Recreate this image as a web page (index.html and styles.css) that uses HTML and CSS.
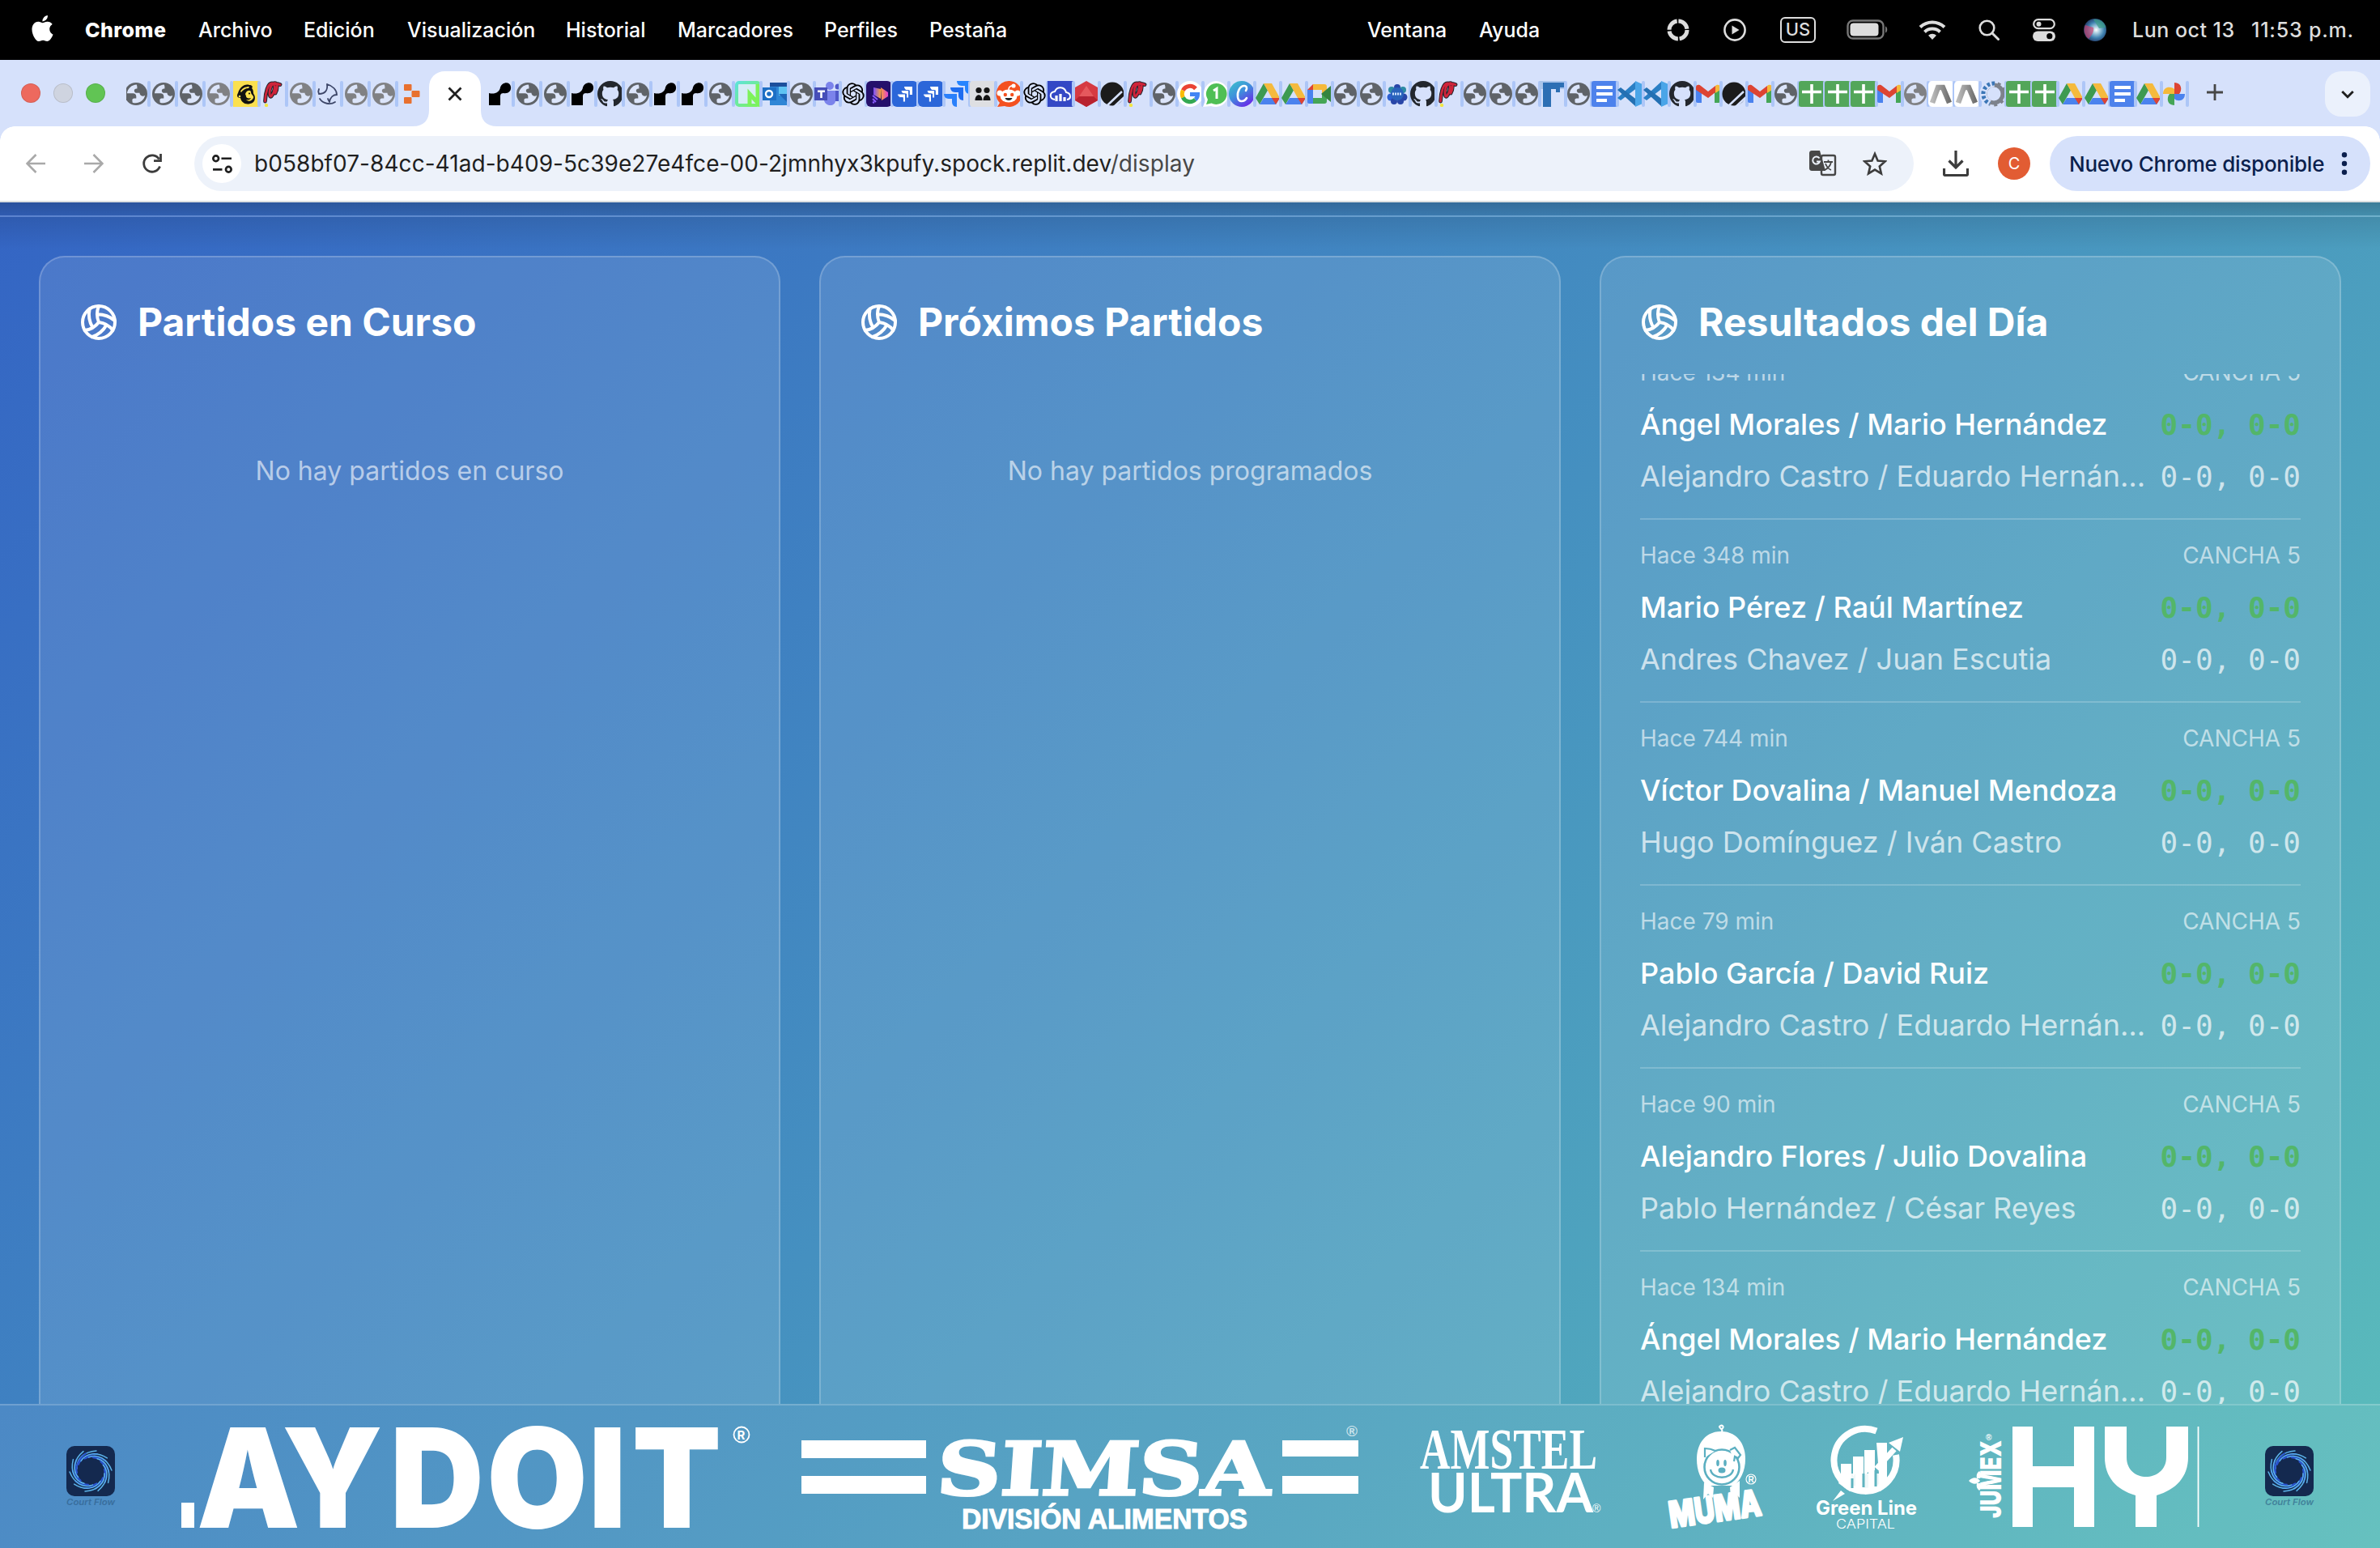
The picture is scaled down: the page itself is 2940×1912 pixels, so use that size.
FILE: index.html
```html
<!DOCTYPE html>
<html lang="es">
<head>
<meta charset="utf-8">
<title>Display</title>
<link rel="stylesheet" href="styles.css">
</head>
<body>
<svg class="sprite" width="0" height="0" aria-hidden="true">
  <defs>
    <linearGradient id="g-neon" x1="0" y1="0" x2="1" y2="1"><stop offset="0" stop-color="#5fe3d8"/><stop offset="1" stop-color="#7df25a"/></linearGradient>
    <linearGradient id="g-canva" x1="0" y1="0" x2=".7" y2="1"><stop offset="0" stop-color="#3cc6c9"/><stop offset=".5" stop-color="#3f8fdc"/><stop offset="1" stop-color="#6a28e8"/></linearGradient>
    <linearGradient id="g-vid" x1="0" y1="0" x2="1" y2="0"><stop offset="0" stop-color="#7b4dff"/><stop offset=".5" stop-color="#f7a13c"/><stop offset="1" stop-color="#e63fd0"/></linearGradient>
    <linearGradient id="g-a" x1="0" y1="0" x2="1" y2="0"><stop offset="0" stop-color="#b9b9b9"/><stop offset="1" stop-color="#6f6f6f"/></linearGradient>
    <radialGradient id="g-siri" cx=".55" cy=".5" r=".55"><stop offset="0" stop-color="#fff"/><stop offset=".3" stop-color="#9fc7dc"/><stop offset=".65" stop-color="#3c7fae"/><stop offset="1" stop-color="#253a66"/></radialGradient>
  </defs>
  <symbol id="globe" viewBox="0 0 32 32"><circle cx="16" cy="16" r="14" fill="currentColor"/><path fill="#dce5fa" d="M16.8 4.6c-6 .2-11 4.600-11.900 10.600h7.200c2.600 0 4.200 1.700 4.200 3.700v2.700h-2.600c-1.500 0-2.500 1-2.300 2.400l.3 2.700c6.700 2.300 14-1.800 15.500-8.900-1.500 1.200-3.600 1.300-5 .3-1.200-.9-1.700-2-1.700-3.300h-3.600c-1.900 0-3.100-1.400-3.100-2.900 0-1.600 1.200-2.500 2.700-2.500h.9V6.800z"/></symbol>
  <symbol id="mailchimp" viewBox="0 0 32 32"><path fill="#fbe04f" d="M0 0h32v32H0z"/><path fill="#111" d="M6 15C8 8 14 3 20 5c3 0 5 2 3 4 3 3 1 6 3 8 2 4 1 10-5 11-6 2-11-2-12-7-4 0-5-3-3-6z"/><path fill="#fbe04f" d="M9 13c2-4 6-6 11-6l-1 2c-4 0-7 2-9 5zM16 14c2-3 6-3 6 0 0 3 4 4 3 7-2 4-6 5-9 2 3 1 5 0 6-2-3 1-6 0-6-2s-2-2 0-5z"/><circle cx="20" cy="15.500" r="1"/><circle cx="8" cy="19" r="1.300" fill="#fbe04f"/></symbol>
  <symbol id="poch" viewBox="0 0 32 32"><path d="M5.500 25C6 14 9 3 14 3s4 10-1 16C10 21 10 7 15.500 3.500s6 5 2.500 11.500M15 4c3-1 6-.5 9 .5" fill="none" stroke="#20242c" stroke-width="4.800" stroke-linecap="round"/><path d="M5.500 25C6 14 9 3 14 3s4 10-1 16C10 21 10 7 15.500 3.500s6 5 2.500 11.500M15 4c3-1 6-.5 9 .5" fill="none" stroke="#d0243a" stroke-width="2.800" stroke-linecap="round"/><circle cx="7" cy="30" r="2.200" fill="#f2e643"/></symbol>
  <symbol id="ballicon" viewBox="0 0 32 32"><g fill="none" stroke="#3d4668" stroke-width="1.800" stroke-linecap="round"><path d="M14 4c1 7-2 12-10 12-1-2-1-4 0-6M14 4c7 2 12 7 12 13-4 0-8 3-9 9M5 22c4 6 13 8 19 4M17 26l-2-4"/></g></symbol>
  <symbol id="replit" viewBox="0 0 32 32"><g fill="#e8702f"><rect x="7" y="4" width="9.500" height="8" rx="1"/><rect x="7" y="20" width="9.500" height="8" rx="1"/><rect x="16.500" y="12" width="10" height="8" rx="1"/></g></symbol>
  <symbol id="manus" viewBox="0 0 32 32"><path d="M2 30V15c7 2 13-1 14-7C18 1 28 0 29 7c1 6-4 9-9 8-4 0-4 3-4 5v10z"/></symbol>
  <symbol id="github" viewBox="0 0 16 16"><path fill="#23272d" d="M8 0C3.580 0 0 3.580 0 8c0 3.540 2.290 6.530 5.470 7.590.4.070.550-.170.550-.380 0-.190-.010-.820-.010-1.490-2.010.370-2.530-.490-2.690-.940-.090-.230-.480-.940-.820-1.130-.280-.150-.680-.520-.010-.530.630-.010 1.080.580 1.230.820.720 1.210 1.870.870 2.330.660.070-.520.280-.870.510-1.070-1.780-.2-3.640-.890-3.640-3.950 0-.870.310-1.590.820-2.150-.080-.2-.360-1.020.080-2.120 0 0 .670-.210 2.200.820.640-.180 1.320-.270 2-.270s1.360.090 2 .270c1.530-1.040 2.200-.820 2.200-.820.440 1.100.160 1.920.080 2.120.510.560.820 1.270.820 2.150 0 3.070-1.870 3.750-3.650 3.950.290.250.540.730.540 1.480 0 1.070-.010 1.930-.010 2.200 0 .210.150.460.550.380A8.010 8.010 0 0 0 16 8c0-4.420-3.580-8-8-8z"/></symbol>
  <symbol id="neon" viewBox="0 0 32 32"><rect x="2" y="2" width="28" height="28" rx="3" fill="#d6ecf6" stroke="url(#g-neon)" stroke-width="4"/><path d="M18 30V16l10 11V4" fill="none" stroke="#7df25a" stroke-width="5"/></symbol>
  <symbol id="outlook" viewBox="0 0 32 32"><path fill="#2f86d6" d="M9 2h23v28H9z"/><path fill="#1c4f9c" d="M9 2h23v5H9z"/><path fill="#5fc3f3" d="M20 7h12v11H20z"/><path fill="#1f66b8" d="M20 16l12 12V16z"/><path fill="#1d6fc5" d="M0 8h17v16H0z"/><circle cx="8" cy="16" r="4" fill="none" stroke="#fff" stroke-width="2.400"/></symbol>
  <symbol id="teams" viewBox="0 0 32 32"><circle cx="19" cy="6" r="5" fill="#7b83eb"/><circle cx="29" cy="7" r="3.500" fill="#5059c9"/><path fill="#5059c9" d="M22 12h10v13H22z"/><path fill="#7b83eb" d="M12 12h14v12c0 8-12 8-14 0z"/><path fill="#464eb8" d="M0 8h16v16H0z"/><path fill="#fff" d="M4 11.500h9V14H9.800v7H7.200v-7H4z"/></symbol>
  <symbol id="openai" viewBox="-2 -2 28 28"><path d="M22.282 9.821a5.985 5.985 0 0 0-.516-4.911 6.046 6.046 0 0 0-6.510-2.900A6.065 6.065 0 0 0 4.981 4.182a5.985 5.985 0 0 0-3.998 2.900 6.046 6.046 0 0 0 .743 7.097 5.980 5.980 0 0 0 .511 4.911 6.051 6.051 0 0 0 6.515 2.900A5.985 5.985 0 0 0 13.260 24a6.056 6.056 0 0 0 5.772-4.206 5.989 5.989 0 0 0 3.998-2.900 6.056 6.056 0 0 0-.748-7.073zm-9.022 12.608a4.476 4.476 0 0 1-2.876-1.041l.142-.080 4.778-2.758a.795.795 0 0 0 .393-.681v-6.737l2.020 1.169a.071.071 0 0 1 .038.052v5.583a4.504 4.504 0 0 1-4.495 4.494zm-9.661-4.125a4.471 4.471 0 0 1-.535-3.014l.142.085 4.783 2.758a.771.771 0 0 0 .781 0l5.843-3.369v2.332a.080.080 0 0 1-.033.062L9.740 19.950a4.499 4.499 0 0 1-6.141-1.646zM2.341 7.896a4.485 4.485 0 0 1 2.366-1.973V11.600a.766.766 0 0 0 .388.677l5.814 3.354-2.020 1.169a.076.076 0 0 1-.071 0l-4.830-2.787A4.504 4.504 0 0 1 2.341 7.872zm16.596 3.856L13.104 8.364 15.119 7.200a.076.076 0 0 1 .071 0l4.830 2.791a4.494 4.494 0 0 1-.677 8.104v-5.677a.790.790 0 0 0-.407-.667zm2.011-3.023l-.142-.085-4.774-2.782a.776.776 0 0 0-.785 0L9.409 9.230V6.897a.066.066 0 0 1 .028-.062l4.830-2.787a4.499 4.499 0 0 1 6.680 4.660zM8.307 12.863l-2.020-1.164a.080.080 0 0 1-.038-.057V6.074a4.499 4.499 0 0 1 7.376-3.454l-.142.081L8.704 5.459a.795.795 0 0 0-.393.681zm1.098-2.365l2.602-1.500 2.607 1.500v2.999l-2.597 1.500-2.607-1.500z"/></symbol>
  <symbol id="vid" viewBox="0 0 32 32"><rect width="32" height="32" rx="6" fill="#25106b"/><path fill="url(#g-vid)" d="M9 8l9 2v12l-9-5zM18 8l9 6v5l-8 5z"/><path d="M8 18l6 5M8 22l4 4M8 26l2 1" stroke="#8a5bff" stroke-width="2"/></symbol>
  <symbol id="jirabox" viewBox="0 0 32 32"><rect width="32" height="32" rx="6" fill="#2b66d9"/><path fill="#fff" d="M15 7h10v10h-3.200v-5.400H19.500c-2.500 0-4.500-2-4.500-4.600z"/><path fill="#fff" d="M11 11.500h9.600V21h-3v-5h-2.300c-2.400 0-4.300-2-4.300-4.500z" stroke="#2b66d9"/><path fill="#fff" d="M6.500 16h10v10h-3.200v-5.400H11c-2.500 0-4.500-2-4.500-4.600z" stroke="#2b66d9"/></symbol>
  <symbol id="jira" viewBox="0 0 32 32"><path fill="#2684ff" d="M16 0h16v16c-4 0-6-3-6-6V6h-4c-4 0-6-3-6-6z"/><path fill="#1f6df0" d="M8 8h16v16c-4 0-6-3-6-6v-4h-4c-4 0-6-3-6-6z"/><path fill="#2a80fb" d="M0 16h16v16c-4 0-6-3-6-6v-4H6c-4 0-6-3-6-6z"/></symbol>
  <symbol id="people" viewBox="0 0 32 32"><rect width="32" height="32" rx="4" fill="#dedfe2"/><g fill="#151515"><circle cx="11" cy="11.500" r="3.600"/><circle cx="21" cy="11.500" r="3.600"/><path d="M6.500 24c0-9 9-9 9 0zM16.500 24c0-9 9-9 9 0z"/></g></symbol>
  <symbol id="reddit" viewBox="0 0 32 32"><path fill="#f4501f" d="M16 0a16 16 0 1 1-5 31l-9 1 3-5A16 16 0 0 1 16 0z"/><circle cx="5" cy="15" r="3.500" fill="#fff"/><circle cx="27" cy="15" r="3.500" fill="#fff"/><ellipse cx="16" cy="18.500" rx="10.500" ry="8" fill="#fff"/><circle cx="22" cy="6" r="2.600" fill="#fff"/><path d="M16 11c0-3 2-5 5-5" stroke="#fff" stroke-width="1.600" fill="none"/><circle cx="11.800" cy="17" r="2.200" fill="#f4501f"/><circle cx="20.200" cy="17" r="2.200" fill="#f4501f"/><path d="M11.500 21h9c-1 4-8 4-9 0z" fill="#222"/></symbol>
  <symbol id="cloud" viewBox="0 0 32 32"><path fill="#3448c5" d="M0 0h32v32H0z"/><path d="M9 23c-7-1-7-9 0-10 3-7 12-6 14 1 6 1 7 8 1 9" fill="none" stroke="#fff" stroke-width="2"/><path d="M11 18v7M16 16v9M21 20v5" stroke="#fff" stroke-width="3.200"/></symbol>
  <symbol id="gem" viewBox="0 0 32 32"><path fill="#d63a42" d="M16 0l14 8v16l-14 8L2 24V8z"/><path fill="#e5595d" d="M16 6l9 13H7z"/><path fill="#b8232f" d="M2 24l5-5h18l5 5-14 8z"/></symbol>
  <symbol id="stripe" viewBox="0 0 32 32"><circle cx="16" cy="16" r="14.500" fill="#1b1b1b"/><path d="M10 30l18-17M18 32l14-13" stroke="#d6e1fb" stroke-width="2.600"/></symbol>
  <symbol id="google" viewBox="0 0 32 32"><circle cx="16" cy="16" r="16" fill="#fff"/><g fill="none" stroke-width="5"><path stroke="#ea4335" d="M7.300 11.700A9.600 9.600 0 0 1 23 9.500"/><path stroke="#fbbc05" d="M7.300 20.300a9.600 9.600 0 0 1 0-8.600"/><path stroke="#34a853" d="M22.500 23a9.600 9.600 0 0 1-15.200-2.700"/><path stroke="#4285f4" d="M16 16.500h9.500c0 3-1 5-3 6.500"/></g></symbol>
  <symbol id="whats" viewBox="0 0 32 32"><path fill="#fff" d="M16 0a16 16 0 1 1-6 31l-10 1 3-8A16 16 0 0 1 16 0z"/><path fill="#4fbf55" d="M16.500 3a13 13 0 1 1-6 24.500L4 29l2-6A13 13 0 0 1 16.500 3z"/><path d="M13 12l4-2.500V22" fill="none" stroke="#fff" stroke-width="3"/></symbol>
  <symbol id="canva" viewBox="0 0 32 32"><circle cx="16" cy="16" r="16" fill="url(#g-canva)"/><path d="M21 12c2-3 1-6-2-6-5 0-9 7-8 14 1 7 8 6 11 1" fill="none" stroke="#fff" stroke-width="2.600" stroke-linecap="round"/></symbol>
  <symbol id="drive" viewBox="0 0 32 32"><path fill="#3d9a50" d="M11 3L1 21l5 8L16 11.500z"/><path fill="#f5ba3d" d="M11 3h10l10 18H21z"/><path fill="#4a82ee" d="M6 29l5-8h20l-5 8z"/><path fill="#dd4433" d="M21 21h10l-5 8z"/></symbol>
  <symbol id="meet" viewBox="0 0 32 32"><path fill="#f5b93a" d="M8 4h14c2 0 3 1 3 3v6l-6 4v-6H8z"/><path fill="#dd4433" d="M1 11l7-7v7z"/><path fill="#4a82ee" d="M1 11h7v17H3c-1 0-2-1-2-2z"/><path fill="#45a556" d="M8 21h11v-5l6 4v5c0 2-1 3-3 3H8z"/><path fill="#35843f" d="M18 16l12-10v20z"/></symbol>
  <symbol id="lotus" viewBox="0 0 32 32"><g fill="#2946a8"><circle cx="16" cy="8" r="4"/><circle cx="9" cy="11" r="4" fill="#2e8ba3"/><circle cx="23" cy="11" r="4" fill="#2e8ba3"/><circle cx="8" cy="20" r="4.500" fill="#2d5fd0"/><circle cx="24" cy="20" r="4.500"/><circle cx="12" cy="25" r="4"/><circle cx="20" cy="25" r="4"/><circle cx="16" cy="16" r="8" fill="#2a63bb"/></g><path d="M10 16h12" stroke="#cfe3ff" stroke-width="3" stroke-dasharray="2 1"/></symbol>
  <symbol id="efe" viewBox="0 0 32 32"><path fill="#a9c4ea" d="M0 0h32v10H0z"/><path fill="#2d6fb4" d="M4 2h26v6h-5v6h-5v-4h-6v22H4z"/></symbol>
  <symbol id="docs" viewBox="0 0 32 32"><rect width="32" height="32" rx="3" fill="#4d82ec"/><path d="M6 8h20M6 16h20M6 24h13" stroke="#fff" stroke-width="4"/></symbol>
  <symbol id="vscode" viewBox="0 0 32 32"><path fill="#2a7fc5" d="M0 21l22-20 3 7L4 24z"/><path fill="#2470b3" d="M0 11l22 20 3-7L4 8z"/><path fill="#4aa5e8" d="M22 0l9 4v24l-9 4z"/></symbol>
  <symbol id="gmail" viewBox="0 0 32 32"><path fill="#4a82ee" d="M1 9l7 5v13H3c-1 0-2-1-2-2z"/><path fill="#45a556" d="M31 9l-7 5v13h5c1 0 2-1 2-2z"/><path fill="#dd4433" d="M1 8c0-4 4-4 6-2l9 7 9-7v8l-9 7-15-10z"/><path fill="#f5b93a" d="M31 8c0-4-4-4-6-2v9l6-4z"/></symbol>
  <symbol id="sheets" viewBox="0 0 32 32"><rect width="32" height="32" rx="3" fill="#53a65a"/><path d="M16 4v24M4 13.500h24" stroke="#fff" stroke-width="3.600"/></symbol>
  <symbol id="adoc" viewBox="0 0 32 32"><rect width="32" height="32" rx="5" fill="#fff"/><path d="M5 27l7-19h6l8 19" fill="none" stroke="url(#g-a)" stroke-width="6.500"/></symbol>
  <symbol id="gear" viewBox="0 0 32 32"><g fill="none"><circle cx="17" cy="16" r="11" stroke="#7d828c" stroke-width="5"/><circle cx="17" cy="16" r="14" stroke="#7d828c" stroke-width="3" stroke-dasharray="4 4.800"/><path d="M18 3A13 13 0 0 0 12 28" stroke="#d6e1fb" stroke-width="9"/><path d="M18 3A13 13 0 0 0 12 28" stroke="#3b76b6" stroke-width="5" stroke-dasharray="3.500 2.500"/></g></symbol>
  <symbol id="photos" viewBox="0 0 32 32"><path fill="#dd4433" d="M16 2c9 0 10 9 6 14h-6z"/><path fill="#4a82ee" d="M16 16h13c0 9-9 10-13 6z"/><path fill="#45a556" d="M16 16v14c-9 0-10-9-6-14z"/><path fill="#f5b93a" d="M16 16H2c0-9 9-10 14-6z"/></symbol>
  <symbol id="volley" viewBox="0 0 24 24"><g fill="none" stroke="#fff" stroke-width="2" stroke-linecap="round" stroke-linejoin="round"><path d="M11.100 7.100a16.550 16.550 0 0 1 10.900 4M12 12a12.600 12.600 0 0 1-8.700 5M16.800 13.600a16.550 16.550 0 0 1-9 7.500M20.700 17a12.800 12.800 0 0 0-8.700-5 13.300 13.300 0 0 1 0-10M6.300 3.800a16.550 16.550 0 0 0 1.900 11.500"/><circle cx="12" cy="12" r="10"/></g></symbol>
  <symbol id="court" viewBox="0 0 96 128"><rect x="2" y="26" width="60" height="62" rx="10" fill="#14294f"/><g transform="translate(32 57)" fill="none" stroke-linecap="round"><g id="blade"><path d="M-17 -3C-18 -15 -8 -24 7 -25" stroke="#5cb4ea" stroke-width="1.500"/><path d="M-15 -8C-12 -16 -3 -21 8 -21" stroke="#2b55d0" stroke-width="1.800"/></g><use href="#blade" transform="rotate(36)"/><use href="#blade" transform="rotate(72)"/><use href="#blade" transform="rotate(108)"/><use href="#blade" transform="rotate(144)"/><use href="#blade" transform="rotate(180)"/><use href="#blade" transform="rotate(216)"/><use href="#blade" transform="rotate(252)"/><use href="#blade" transform="rotate(288)"/><use href="#blade" transform="rotate(324)"/></g><text x="2" y="99" class="t-court" textLength="60" lengthAdjust="spacingAndGlyphs">Court Flow</text></symbol>
</svg>

<header class="menubar">
  <svg class="apple" viewBox="2 0 20 24"><path fill="#fff" d="M12.152 6.896c-.948 0-2.415-1.078-3.960-1.040-2.040.027-3.910 1.183-4.961 3.014-2.117 3.675-.546 9.103 1.519 12.090 1.013 1.454 2.208 3.090 3.792 3.039 1.520-.065 2.090-.987 3.935-.987 1.831 0 2.350.987 3.960.948 1.637-.026 2.676-1.480 3.676-2.948 1.156-1.688 1.636-3.325 1.662-3.415-.039-.013-3.182-1.221-3.220-4.857-.026-3.040 2.480-4.494 2.597-4.559-1.429-2.090-3.623-2.324-4.390-2.376-2-.156-3.675 1.090-4.610 1.090zM15.530 3.830c.843-1.012 1.400-2.427 1.245-3.830-1.207.052-2.662.805-3.532 1.818-.780.896-1.454 2.338-1.273 3.714 1.338.104 2.715-.688 3.559-1.701"/></svg>
  <nav class="menu">
    <b class="m-chrome">Chrome</b><span class="m-archivo">Archivo</span><span class="m-edicion">Edición</span><span class="m-visual">Visualización</span><span class="m-historial">Historial</span><span class="m-marc">Marcadores</span><span class="m-perf">Perfiles</span><span class="m-pest">Pestaña</span>
  </nav>
  <nav class="menu menu-right"><span class="m-vent">Ventana</span><span class="m-ayuda">Ayuda</span></nav>
  <div class="status">
    <svg class="s-ring" viewBox="0 0 28 28"><circle cx="14" cy="14" r="11" fill="none" stroke="#ddd" stroke-width="5" stroke-dasharray="15.500 1.800"/></svg>
    <svg class="s-play" viewBox="0 0 28 28"><circle cx="14" cy="14" r="12.600" fill="none" stroke="#ddd" stroke-width="2.600"/><path fill="#ddd" d="M10.500 8.500l9 5.500-9 5.500z"/></svg>
    <span class="s-us">US</span>
    <svg class="s-bat" viewBox="0 0 52 26"><rect x="1.500" y="1.500" width="44" height="22" rx="6.500" fill="none" stroke="#777" stroke-width="2.400"/><rect x="4.500" y="4.500" width="35" height="16" rx="4" fill="#ddd"/><path d="M48 8.500c3 1 3 7 0 8z" fill="#777"/></svg>
    <svg class="s-wifi" viewBox="0 0 34 26"><g fill="none" stroke="#ddd" stroke-width="4"><path d="M2 9.500a21.500 21.500 0 0 1 30 0M7.500 15.500a13.500 13.500 0 0 1 19 0"/></g><path fill="#ddd" d="M17 25l-5-5.200a7 7 0 0 1 10 0z"/></svg>
    <svg class="s-find" viewBox="0 0 26 26"><circle cx="10.500" cy="10.500" r="8.800" fill="none" stroke="#ddd" stroke-width="2.600"/><path d="M17 17l7.500 7.500" stroke="#ddd" stroke-width="3" stroke-linecap="round"/></svg>
    <svg class="s-cc" viewBox="0 0 28 28"><rect x="1.200" y="1.200" width="25.600" height="11" rx="5.500" fill="none" stroke="#ddd" stroke-width="2.200"/><circle cx="7.500" cy="6.700" r="3" fill="#ddd"/><rect x="0" y="15.500" width="28" height="12.500" rx="6.200" fill="#ddd"/><circle cx="20.800" cy="21.700" r="3.600"/></svg>
    <svg class="s-siri" viewBox="0 0 28 28"><circle cx="14" cy="14" r="14" fill="url(#g-siri)"/><path d="M2 8a14 14 0 0 0 4 17c5-5 7-10 6-14z" fill="#d0416f" opacity=".65"/><path d="M12 1c8-1 14 4 15 10l-8 1z" fill="#3c9c86" opacity=".7"/></svg>
    <span class="s-date">Lun oct 13</span><span class="s-time">11:53 p.m.</span>
  </div>
</header>

<div class="tabstrip">
  <div class="lights"><i class="red"></i><i class="grey"></i><i class="green"></i></div>
  <div class="tabs tabs-left">
    <i class="cut"><svg class="g1"><use href="#globe"/></svg></i><i><svg class="g1"><use href="#globe"/></svg></i><i><svg class="g1"><use href="#globe"/></svg></i><i><svg class="g2"><use href="#globe"/></svg></i><i><svg><use href="#mailchimp"/></svg></i><i><svg><use href="#poch"/></svg></i><i><svg class="g2"><use href="#globe"/></svg></i><i><svg><use href="#ballicon"/></svg></i><i><svg class="g2"><use href="#globe"/></svg></i><i><svg class="g2"><use href="#globe"/></svg></i><i class="last"><svg><use href="#replit"/></svg></i>
  </div>
  <div class="active-tab">
    <svg viewBox="0 0 104 68"><path fill="#fff" d="M0 68c14 0 20-8 20-20V20C20 8 28 0 40 0h24c12 0 20 8 20 20v28c0 12 6 20 20 20z"/><path d="M44.500 20.500l15 15M59.500 20.500l-15 15" stroke="#1f1f1f" stroke-width="2.800"/></svg>
  </div>
  <div class="tabs tabs-right">
    <i><svg><use href="#manus"/></svg></i><i><svg class="g1"><use href="#globe"/></svg></i><i><svg class="g1"><use href="#globe"/></svg></i><i><svg><use href="#manus"/></svg></i><i><svg><use href="#github"/></svg></i><i><svg class="g1"><use href="#globe"/></svg></i><i><svg><use href="#manus"/></svg></i><i><svg><use href="#manus"/></svg></i><i><svg class="g1"><use href="#globe"/></svg></i><i><svg><use href="#neon"/></svg></i><i><svg><use href="#outlook"/></svg></i><i><svg class="g1"><use href="#globe"/></svg></i><i><svg><use href="#teams"/></svg></i><i><svg><use href="#openai"/></svg></i><i><svg><use href="#vid"/></svg></i><i><svg><use href="#jirabox"/></svg></i><i><svg><use href="#jirabox"/></svg></i><i><svg><use href="#jira"/></svg></i><i><svg><use href="#people"/></svg></i><i><svg><use href="#reddit"/></svg></i><i><svg><use href="#openai"/></svg></i><i><svg><use href="#cloud"/></svg></i><i><svg><use href="#gem"/></svg></i><i><svg><use href="#stripe"/></svg></i><i><svg><use href="#poch"/></svg></i><i><svg class="g1"><use href="#globe"/></svg></i><i><svg><use href="#google"/></svg></i><i><svg><use href="#whats"/></svg></i><i><svg><use href="#canva"/></svg></i><i><svg><use href="#drive"/></svg></i><i><svg><use href="#drive"/></svg></i><i><svg><use href="#meet"/></svg></i><i><svg class="g1"><use href="#globe"/></svg></i><i><svg class="g1"><use href="#globe"/></svg></i><i><svg><use href="#lotus"/></svg></i><i><svg><use href="#github"/></svg></i><i><svg><use href="#poch"/></svg></i><i><svg class="g1"><use href="#globe"/></svg></i><i><svg class="g1"><use href="#globe"/></svg></i><i><svg class="g1"><use href="#globe"/></svg></i><i><svg><use href="#efe"/></svg></i><i><svg class="g1"><use href="#globe"/></svg></i><i><svg><use href="#docs"/></svg></i><i><svg><use href="#vscode"/></svg></i><i><svg><use href="#vscode"/></svg></i><i><svg><use href="#github"/></svg></i><i><svg><use href="#gmail"/></svg></i><i><svg><use href="#stripe"/></svg></i><i><svg><use href="#gmail"/></svg></i><i><svg class="g1"><use href="#globe"/></svg></i><i><svg><use href="#sheets"/></svg></i><i><svg><use href="#sheets"/></svg></i><i><svg><use href="#sheets"/></svg></i><i><svg><use href="#gmail"/></svg></i><i><svg class="g2"><use href="#globe"/></svg></i><i><svg><use href="#adoc"/></svg></i><i><svg><use href="#adoc"/></svg></i><i><svg><use href="#gear"/></svg></i><i><svg><use href="#sheets"/></svg></i><i><svg><use href="#sheets"/></svg></i><i><svg><use href="#drive"/></svg></i><i><svg><use href="#drive"/></svg></i><i><svg><use href="#docs"/></svg></i><i><svg><use href="#drive"/></svg></i><i><svg><use href="#photos"/></svg></i>
  </div>
  <svg class="newtab" viewBox="0 0 22 22"><path d="M11 1v20M1 11h20" stroke="#474747" stroke-width="2.800"/></svg>
  <div class="chevron"><svg viewBox="0 0 20 12"><path d="M2.500 2l7.500 7.500L17.500 2" fill="none" stroke="#1f1f1f" stroke-width="3.200"/></svg></div>
</div>

<div class="toolbar">
  <svg class="t-back" viewBox="0 0 24 24"><path d="M24 12H2M12.500 1L1.500 12l11 11" fill="none" stroke="#a9a9a9" stroke-width="2.600"/></svg>
  <svg class="t-fwd" viewBox="0 0 24 24"><path d="M0 12h22M11.500 1l11 11-11 11" fill="none" stroke="#a9a9a9" stroke-width="2.600"/></svg>
  <svg class="t-reload" viewBox="0 0 24 24"><path d="M21.500 15.500A10.200 10.200 0 1 1 20.500 6.500M22.500 0v8.700H14" fill="none" stroke="#3c3c3c" stroke-width="2.800"/></svg>
  <div class="omnibox">
    <span class="site"><svg viewBox="0 0 24 24"><g fill="none" stroke="#1f1f1f" stroke-width="2.600"><circle cx="4.500" cy="5.500" r="3.200"/><path d="M11 5.500h12M1 18.500h11"/><circle cx="19.500" cy="18.500" r="3.200"/></g></svg></span>
    <span class="url">b058bf07-84cc-41ad-b409-5c39e27e4fce-00-2jmnhyx3kpufy.spock.replit.dev<em>/display</em></span>
    <svg class="o-trans" viewBox="0 0 34 34"><rect x="15" y="7" width="17" height="24" rx="2" fill="none" stroke="#474747" stroke-width="2.400"/><path fill="#474747" d="M3 1h10l7 25H3c-1.500 0-3-1-3-3V4c0-2 1.500-3 3-3z"/><path d="M12.500 10.500A4.500 4.500 0 1 0 13 14.500H9" fill="none" stroke="#edf2fa" stroke-width="2"/><path d="M18 15h11M23.500 12.500V15M27 15c-1 5-4 8-8 10M20 17c1 3 4 7 7 8" fill="none" stroke="#474747" stroke-width="1.800"/></svg>
    <svg class="o-star" viewBox="0 0 30 30"><path d="M15 3l3.600 8.500 9.200.8-7 6.100 2.100 9-7.900-4.800-7.900 4.800 2.100-9-7-6.100 9.200-.8z" fill="none" stroke="#3c3c3c" stroke-width="2.600"/></svg>
  </div>
  <svg class="t-down" viewBox="0 0 32 32"><path d="M16 0v20M7.500 12.500L16 21l8.500-8.500M1.500 22v7c0 1 .5 1.500 1.500 1.500h26c1 0 1.500-.5 1.500-1.500v-7" fill="none" stroke="#3c3c3c" stroke-width="3.200"/></svg>
  <span class="avatar">C</span>
  <div class="update"><span>Nuevo Chrome disponible</span><svg viewBox="0 0 8 28"><g fill="#0b1f4d"><circle cx="4" cy="3.200" r="3.200"/><circle cx="4" cy="14" r="3.200"/><circle cx="4" cy="24.800" r="3.200"/></g></svg></div>
</div>

<main class="page">
  <div class="pagehead"></div>
  <div class="columns">
    <section class="card">
      <h2><svg><use href="#volley"/></svg>Partidos en Curso</h2>
      <p class="empty">No hay partidos en curso</p>
    </section>
    <section class="card">
      <h2><svg><use href="#volley"/></svg>Próximos Partidos</h2>
      <p class="empty">No hay partidos programados</p>
    </section>
    <section class="card">
      <h2><svg><use href="#volley"/></svg>Resultados del Día</h2>
      <div class="list">
        <article><div class="meta"><span>Hace 134 min</span><span>CANCHA 5</span></div><div class="win"><span>Ángel Morales / Mario Hernández</span><code>0-0, 0-0</code></div><div class="lose"><span>Alejandro Castro / Eduardo Hernández</span><code>0-0, 0-0</code></div></article>
        <article><div class="meta"><span>Hace 348 min</span><span>CANCHA 5</span></div><div class="win"><span>Mario Pérez / Raúl Martínez</span><code>0-0, 0-0</code></div><div class="lose"><span>Andres Chavez / Juan Escutia</span><code>0-0, 0-0</code></div></article>
        <article><div class="meta"><span>Hace 744 min</span><span>CANCHA 5</span></div><div class="win"><span>Víctor Dovalina / Manuel Mendoza</span><code>0-0, 0-0</code></div><div class="lose"><span>Hugo Domínguez / Iván Castro</span><code>0-0, 0-0</code></div></article>
        <article><div class="meta"><span>Hace 79 min</span><span>CANCHA 5</span></div><div class="win"><span>Pablo García / David Ruiz</span><code>0-0, 0-0</code></div><div class="lose"><span>Alejandro Castro / Eduardo Hernández</span><code>0-0, 0-0</code></div></article>
        <article><div class="meta"><span>Hace 90 min</span><span>CANCHA 5</span></div><div class="win"><span>Alejandro Flores / Julio Dovalina</span><code>0-0, 0-0</code></div><div class="lose"><span>Pablo Hernández / César Reyes</span><code>0-0, 0-0</code></div></article>
        <article><div class="meta"><span>Hace 134 min</span><span>CANCHA 5</span></div><div class="win"><span>Ángel Morales / Mario Hernández</span><code>0-0, 0-0</code></div><div class="lose"><span>Alejandro Castro / Eduardo Hernández</span><code>0-0, 0-0</code></div></article>
      </div>
    </section>
  </div>
  <footer class="sponsors">
    <svg width="96"><use href="#court"/></svg>
    <svg width="718" viewBox="224 0 718 128"><path fill="#fff" d="M224 96h16v31h-16z"/><text class="t-ay" y="127" transform="translate(243 0) scale(.94 1)"><tspan x="0">A</tspan><tspan x="112">Y</tspan><tspan x="254">D</tspan><tspan x="381">O</tspan><tspan x="515">I</tspan><tspan x="572">T</tspan></text><circle cx="916" cy="12" r="9.500" fill="none" stroke="#fff" stroke-width="1.800"/><text class="t-r" x="910.500" y="17.500">R</text></svg>
    <svg width="700" viewBox="990 0 700 128"><path fill="#fff" d="M990 19h154v22H990zM990 63h154v22H990zM1584 19h94v20h-94zM1584 63h94v22h-94z"/><text class="t-simsa" x="0" y="0" transform="translate(1156 85.500) skewX(-4)" textLength="412" lengthAdjust="spacingAndGlyphs">SIMSA</text><text class="t-div" x="1188" y="127.500" textLength="353" lengthAdjust="spacingAndGlyphs">DIVISIÓN ALIMENTOS</text><text class="t-reg" x="1663" y="14">®</text></svg>
    <svg width="254" viewBox="1738 0 254 128"><text class="t-amstel" x="1754" y="54" textLength="219" lengthAdjust="spacingAndGlyphs">AMSTEL</text><text class="t-ultra" x="1764" y="108" textLength="204" lengthAdjust="spacingAndGlyphs">ULTRA</text><text class="t-reg2" x="1967" y="108">®</text></svg>
    <svg width="150" viewBox="2040 0 150 128"><g fill="#fff"><path d="M2127 9c2-5-3-4-3-7 3-3 7 0 3 3" fill="none" stroke="#fff" stroke-width="2"/><path d="M2126 8c20 0 30 16 30 34 0 15-6 26-14 33h-33c-8-7-13-18-13-33 0-18 10-34 30-34z"/><path d="M2105 71l12 6-1 13-6-5-6 7zM2149 69l-12 8 1 13 6-5 5 5z"/><circle cx="2127" cy="52" r="21.500" stroke="#5bafc1" stroke-width="2.600"/><path d="M2106 40v-11c5 0 9 1 13 3M2137 31l6-3 7 9-3 4-4-2-1 6" stroke="#5bafc1" stroke-width="2.200"/></g><g fill="#5bafc1"><ellipse cx="2122" cy="47" rx="1.800" ry="4"/><ellipse cx="2131" cy="47" rx="1.800" ry="4"/><ellipse cx="2127" cy="56" rx="4.500" ry="3.600"/></g><path d="M2113 55c2 13 26 13 28 0" fill="none" stroke="#5bafc1" stroke-width="2.400"/><text class="t-muma" x="2064" y="127" textLength="114" lengthAdjust="spacingAndGlyphs" transform="rotate(-8 2064 127)">MUMA</text><circle cx="2163" cy="67" r="6" fill="none" stroke="#fff" stroke-width="1.200"/><text class="t-reg3" x="2159.600" y="71">R</text></svg>
    <svg width="140" viewBox="2238 0 140 128"><path d="M2318 7.500A38.500 38.500 0 1 0 2342 37" fill="none" stroke="#fff" stroke-width="8"/><path fill="#fff" d="M2274 48h13v32h-6v-10h-7zM2289 39h13v40h-10V60l-3 4zM2303 31h13v48h-8V58l-5 5zM2318 22h13v52h-10V60z"/><path fill="#fff" d="M2276 60h55v12l-8 10h-38l-14-10z" opacity=".9"/><path d="M2288 66v12M2302 60v17M2317 56v20" stroke="#5eb3bf" stroke-width="3"/><path d="M2318 54l22-24" stroke="#fff" stroke-width="7"/><path fill="#fff" d="M2333 22l18-7-4 18-5-4zM2264 94l10-13 5 4z"/><text class="t-green" x="2243" y="111" textLength="125" lengthAdjust="spacingAndGlyphs">Green Line</text><text class="t-capital" x="2268" y="127.500" textLength="73" lengthAdjust="spacingAndGlyphs">CAPITAL</text></svg>
    <svg width="296" viewBox="2426 0 296 128"><text class="t-jumex" transform="translate(2472 115) rotate(-90)" textLength="96" lengthAdjust="spacingAndGlyphs">JUMEX</text><path d="M2446 69c-4-5-9-5-14 0 5 5 10 5 14 0zM2442 66c-1-4 0-7 3-9 3 3 3 6 1 9zM2442 72c-1 4 0 7 3 9 3-3 3-6 1-9z" fill="#fff"/><text class="t-reg3" x="2453" y="19">®</text><path fill="#fff" d="M2486 2h25v49h51V2h25v124h-25V77h-51v49h-25zM2600 2h27v38c0 16 12 24 24 24s25-8 25-24V2h27v38c0 24-15 40-39 47v39h-26V87c-24-7-38-23-38-47z"/><path d="M2715.500 2v124" stroke="#fff" stroke-width="1.800"/></svg>
    <svg width="96" class="tail"><use href="#court"/></svg>
  </footer>
</main>
</body>
</html>
```
FILE: styles.css
```css
* { box-sizing: border-box; }
body {
  margin: 0;
  width: 2940px;
  height: 1912px;
  overflow: hidden;
  display: flex;
  flex-direction: column;
  font-family: Inter, "Liberation Sans", sans-serif;
  color: #fff;
  background: #fff;
}
svg { display: block; flex: none; }
.sprite { position: absolute; }

/* system menu bar */
.menubar {
  height: 74px;
  flex: none;
  background: #000;
  display: flex;
  align-items: center;
  padding-left: 39px;
  font-size: 25px;
  font-weight: 500;
}
.apple { width: 27px; height: 32px; margin: -4px 39px 0 0; }
.menu { display: flex; gap: 40px; white-space: nowrap; }
.menu > * { flex: none; }
.m-chrome { width: 100px; font-weight: 800; letter-spacing: .4px; }
.m-archivo { width: 90px; }
.m-edicion { width: 88px; }
.m-visual { width: 156px; }
.m-historial { width: 98px; }
.m-marc { width: 141px; }
.m-perf { width: 90px; }
.m-pest { width: 96px; }
.m-vent { width: 98px; }
.m-ayuda { width: 74px; }
.menu-right { margin-left: 445px; }
.status { display: flex; align-items: center; margin-left: 158px; color: #ddd; white-space: nowrap; }
.s-ring { width: 28px; height: 28px; margin-right: 42px; }
.s-play { width: 28px; height: 28px; margin-right: 42px; }
.s-us {
  width: 44px; height: 32px; margin-right: 38px;
  border: 2.5px solid #ddd; border-radius: 6px;
  font-size: 22px; line-height: 27px; text-align: center;
}
.s-bat { width: 52px; height: 26px; margin-right: 37px; }
.s-wifi { width: 34px; height: 26px; margin-right: 40px; }
.s-find { width: 26px; height: 26px; margin-right: 41px; }
.s-cc { width: 28px; height: 28px; margin-right: 35px; }
.s-siri { width: 28px; height: 28px; margin-right: 32px; }
.s-date { width: 147px; letter-spacing: .5px; }
.s-time { letter-spacing: .8px; }

/* tab strip */
.tabstrip {
  height: 82px;
  flex: none;
  background: #d6e1fb;
  display: flex;
  align-items: flex-start;
  padding: 14px 12px 0 26px;
}
.lights { display: flex; gap: 16px; width: 126px; padding-top: 15px; }
.lights i { width: 24px; height: 24px; border-radius: 50%; border: 1px solid rgba(0, 0, 0, .1); }
.red { background: #ed695e; }
.grey { background: #cfd4e0; }
.green { background: #61c454; }
.tabs { display: flex; padding-top: 12px; }
.tabs i { position: relative; width: 34px; height: 32px; display: block; flex: none; }
.tabs svg { position: relative; width: 32px; height: 32px; }
.tabs i::after {
  content: "";
  position: absolute;
  left: 30px; top: 0;
  width: 4px; height: 32px;
  border-radius: 2px;
  background: #adc6f7;
}
.tabs-left i.last::after { display: none; }
.tabs .cut { clip-path: inset(0 -2px 0 4px); }
.tabs-right { width: 2100px; }
.tabs-right i:nth-child(n+11) { width: 32px; }
.g1 { color: #5f6368; }
.g2 { color: #808184; }
.active-tab { width: 104px; height: 68px; margin: 0 -12px 0 -16px; }
.active-tab svg { width: 104px; height: 68px; }
.newtab { width: 22px; height: 22px; margin: 15px 0 0 23px; }
.chevron {
  width: 56px; height: 56px; margin-left: auto;
  border-radius: 20px; background: #ebf1fc;
  display: flex; align-items: center; justify-content: center;
}
.chevron svg { width: 18px; height: 11px; }

/* address bar */
.toolbar {
  height: 94px;
  flex: none;
  background: #fff;
  border-bottom: 2px solid #dcdfe0;
  display: flex;
  align-items: center;
  padding: 0 12px 0 32px;
  position: relative;
}
.toolbar::before, .toolbar::after {
  content: "";
  position: absolute;
  top: 0; width: 18px; height: 18px;
}
.toolbar::before { left: 0; background: radial-gradient(circle at 100% 100%, transparent 17.5px, #d6e1fb 18px); }
.toolbar::after { right: 0; background: radial-gradient(circle at 0 100%, transparent 17.5px, #d6e1fb 18px); }
.t-back, .t-fwd, .t-reload { width: 24px; height: 24px; margin-right: 48px; }
.t-reload { margin-right: 40px; }
.omnibox {
  width: 2124px; height: 68px; border-radius: 34px;
  background: #edf2fa;
  display: flex; align-items: center;
  padding: 0 33px 0 10px;
}
.site { width: 48px; height: 48px; border-radius: 50%; background: #fff; display: flex; align-items: center; justify-content: center; }
.site svg { width: 25px; height: 25px; }
.url { flex: 1; margin-left: 16px; font-size: 28px; letter-spacing: .06px; color: #1f1f1f; white-space: nowrap; }
.url em { font-style: normal; color: #474747; }
.o-trans { width: 34px; height: 34px; margin-right: 32px; }
.o-star { width: 30px; height: 30px; }
.t-down { width: 32px; height: 32px; margin: 0 36px 0 36px; }
.avatar {
  width: 40px; height: 40px; border-radius: 50%;
  background: #e25c33; font-size: 20px; line-height: 40px; text-align: center;
}
.update {
  width: 396px; height: 68px; margin-left: 24px; border-radius: 34px;
  background: #d6e1fb; color: #0b1f4d;
  display: flex; align-items: center; justify-content: space-between;
  padding: 0 28px 0 24px;
  font-size: 26px; font-weight: 500; letter-spacing: -.25px; white-space: nowrap;
}
.update svg { width: 8px; height: 28px; }

/* scoreboard */
.page {
  flex: 1;
  min-height: 0;
  display: flex;
  flex-direction: column;
  background: linear-gradient(135deg, #3465c4 0%, #4590c0 50%, #5bbdbb 100%);
}
.pagehead {
  height: 18px;
  flex: none;
  border-bottom: 2px solid rgba(255, 255, 255, .2);
  background: linear-gradient(rgba(0, 0, 0, .2), rgba(0, 0, 0, .1)) padding-box;
}
.columns {
  flex: 1;
  min-height: 0;
  overflow: hidden;
  display: grid;
  grid-template-columns: repeat(3, 916px);
  gap: 48px;
  padding: 48px 48px 0;
  background: linear-gradient(rgba(0, 0, 0, .1), rgba(0, 0, 0, 0) 40px);
}
.card {
  height: 1500px;
  border: 2px solid rgba(255, 255, 255, .2);
  border-radius: 32px;
  background: rgba(255, 255, 255, .115);
  padding: 48px;
}
.card h2 {
  margin: 0 0 32px;
  display: flex; align-items: center; gap: 24px;
  font-size: 48px; line-height: 64px; font-weight: 700;
}
.card h2 svg { width: 48px; height: 48px; }
.empty {
  margin: 0; padding-top: 96px;
  text-align: center;
  font-size: 32px; line-height: 48px;
  color: rgba(255, 255, 255, .6);
}
.list { overflow: hidden; }
.list article:first-child { margin-top: -46px; }
article {
  height: 226px;
  padding-top: 24px;
  border-bottom: 2px solid rgba(255, 255, 255, .2);
}
article > div { display: flex; justify-content: space-between; gap: 16px; white-space: nowrap; }
.meta { font-size: 28px; line-height: 40px; margin-bottom: 16px; color: rgba(255, 255, 255, .6); }
.win, .lose { font-size: 36px; line-height: 57px; }
.win span, .lose span { min-width: 0; overflow: hidden; text-overflow: ellipsis; }
.win { margin-bottom: 7px; font-weight: 500; }
.lose { color: rgba(255, 255, 255, .7); }
code { font-family: "DejaVu Sans Mono", "Liberation Mono", monospace; font-size: 36px; flex: none; }
.win code { color: #53b669; font-weight: 700; }

/* sponsors */
.sponsors {
  height: 178px;
  flex: none;
  display: flex;
  gap: 48px;
  padding: 24px 0 24px 80px;
  border-top: 2px solid rgba(255, 255, 255, .2);
  background: rgba(255, 255, 255, .07);
}
.sponsors > svg { height: 128px; overflow: visible; }
.sponsors > .tail { margin-left: 26px; }
.sponsors text { fill: #fff; }
.t-ay { font: 900 171px Inter, sans-serif; }
.t-r { font: 700 15px Inter, sans-serif; }
.t-simsa { font: 700 90px "DejaVu Serif", serif; stroke: #fff; stroke-width: 3.5px; }
.t-div { font: 700 35px "Liberation Sans", sans-serif; stroke: #fff; stroke-width: 1px; }
.t-reg { font: 700 19px "Liberation Sans", sans-serif; opacity: .7; }
.t-reg2 { font: 400 14px "Liberation Sans", sans-serif; }
.t-reg3 { font: 700 10px "Liberation Sans", sans-serif; }
.t-amstel { font: 700 72px "Liberation Serif", serif; }
.t-ultra { font: 700 66px Lato, sans-serif; }
.t-muma { font: 800 44px Inter, sans-serif; stroke: #fff; stroke-width: 3px; stroke-linejoin: round; }
.t-green { font: 700 24px Inter, sans-serif; }
.t-capital { font: 300 16px Inter, sans-serif; }
.t-jumex { font: 900 36px Inter, sans-serif; }
.sponsors .t-court, .t-court { font: italic 600 11px Inter, sans-serif; fill: #2b5a83; opacity: .6; }
```
